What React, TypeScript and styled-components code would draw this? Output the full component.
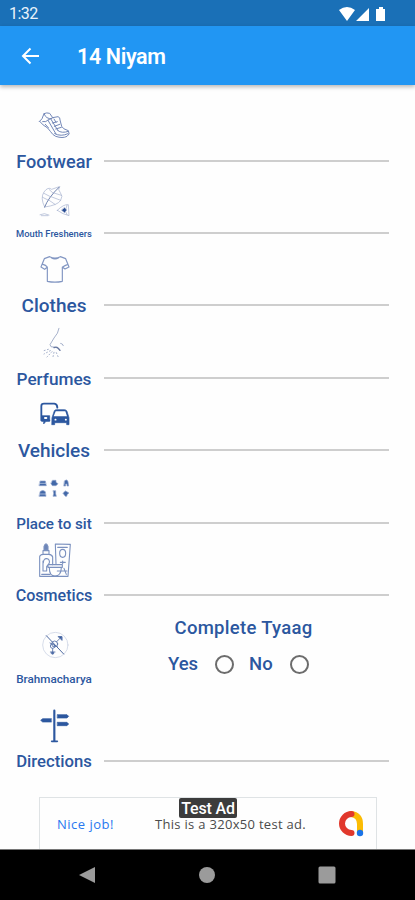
import React from "react";
import styled, { createGlobalStyle } from "styled-components";

const Global = createGlobalStyle`
  * { box-sizing: border-box; }
  body { margin: 0; background: #fefefe; font-family: Roboto, "Liberation Sans", sans-serif; }
`;
const navy = "#2c579f";

const Screen = styled.div`
  width: 415px; height: 900px; display: flex; flex-direction: column;
  background: #fefefe; overflow: hidden;
`;
const StatusBar = styled.div`
  height: 26px; flex: none; background: #1a70b7; color: #e9f3fb;
  display: flex; align-items: center; justify-content: space-between;
  padding: 1px 27px 0 9px; font-size: 16px; letter-spacing: -0.5px;
`;
const AppBar = styled.header`
  height: 59px; flex: none; background: #2196f3; color: #fff; z-index: 1;
  display: flex; align-items: center; padding: 1px 21px 0; gap: 37px;
  box-shadow: 0 2px 4px rgba(0, 0, 0, 0.28);
`;
const Title = styled.h1`
  margin: 0; font-size: 21.5px; font-weight: 600; letter-spacing: -0.35px;
`;
const List = styled.main`
  flex: 1; padding-top: 14px; display: flex; flex-direction: column;
`;
const Row = styled.section<{ $h: number }>`
  height: ${(p) => p.$h}px; flex: none; display: flex; align-items: flex-end;
  padding: 0 26px 0 16px; gap: 12px;
`;
const Kind = styled.div`
  width: 76px; display: flex; flex-direction: column; align-items: center;
`;
const Picture = styled.svg`
  width: 60px; height: 52px; fill: none; stroke: ${navy}; stroke-width: 3;
  stroke-linecap: round; stroke-linejoin: round; overflow: visible;
`;
const Label = styled.div<{ $size: number }>`
  height: 20px; line-height: 22px; white-space: nowrap; color: ${navy};
  font-weight: 500; font-size: ${(p) => p.$size}px;
`;
const Field = styled.div`
  flex: 1; height: 2px; margin-bottom: 9px; background: #cecece;
`;
const Choice = styled.div`
  width: 285px; height: 83px; padding-top: 12px;
  display: flex; flex-direction: column; color: ${navy};
  font-size: 18.5px; font-weight: 500; line-height: 22px;
`;
const Question = styled.div`
  padding-left: 70.5px; letter-spacing: 0.3px; white-space: nowrap;
`;
const Options = styled.div`
  display: flex; align-items: center; padding: 14px 0 0 64px;
`;
const Option = styled.label<{ $w: number }>`
  width: ${(p) => p.$w}px; display: flex; align-items: center; justify-content: space-between;
`;
const Radio = styled.span`
  width: 19px; height: 19px; border: 2px solid #6c6c6c; border-radius: 50%;
`;
const Gap = styled.div`
  width: 15px;
`;
const Ad = styled.aside`
  position: relative; width: 338px; height: 52px; margin: 0 0 0 39px; flex: none;
  border: 1px solid #dfe3e5; border-bottom: 0; display: flex; align-items: center;
  padding: 0 12px 0 17px; font-family: "Open Sans", sans-serif;
`;
const AdLink = styled.span`
  width: 98px; color: #2878f0; font-size: 13px; letter-spacing: 0.5px; white-space: nowrap;
`;
const AdText = styled.span`
  flex: 1; color: #4b4b4b; font-size: 13px; letter-spacing: 0.3px; white-space: nowrap;
`;
const AdBadge = styled.div`
  position: absolute; left: 139px; top: 0; width: 58px; height: 20px; border-radius: 2px;
  background: #3c3c3c; color: #fff; text-align: center; white-space: nowrap;
  font: 500 16px/22px Roboto, sans-serif; letter-spacing: -0.15px;
`;
const NavBar = styled.nav`
  height: 51px; flex: none; background: #000; border-top: 1px solid #777;
  display: flex; justify-content: space-between; align-items: center; padding: 0 79px 0 78px;
`;

const Shoe = () => (
  <g strokeWidth={3} stroke="#7488b8">
    <path d="M119 79 Q127 75 132 56 Q140 52 149 55 L158 68 L174 65 Q181 67 180 75 L185 94 Q188 102 205 107 Q212 118 201 124 Q188 131 167 124 Q158 120 151 109 L143 99 Q128 91 119 79Z" />
    <path d="M132 56 Q138 73 155 71 M128 80 Q139 82 144 75 L158 68 M144 76 L168 117 M153 73 L174 107 M157 84 L172 80 M163 94 L179 88 M167 102 L184 97 M174 107 Q185 116 205 109 M164 116 Q183 126 204 116 M136 88 L145 98 M162 72 L168 82" />
  </g>
);
const Leaf = () => (
  <g strokeWidth={1.8} stroke="#98a6c8">
    <path d="M134 111 Q120 84 132 66 Q144 49 155 58 L178 50 Q173 60 181 68 Q190 78 182 91 Q173 106 134 111Z" />
    <path d="M134 111 Q145 82 178 51" stroke="#7184b0" strokeWidth={3} />
    <path d="M144 90 L128 82 M151 80 L132 70 M160 70 L148 59 M146 90 L165 103 M153 80 L182 91 M162 69 L184 76" />
    <path d="M120 134 Q133 127 147 135 M124 137 L144 137 M172 121 Q191 102 205 104 L207 137 Q188 133 172 121Z" />
    <path d="M194 113 L200 120 L194 128 L185 121Z" fill="#254b93" />
    <path d="M201 106 L198 116 M201 134 L197 125" />
  </g>
);
const Shirt = () => (
  <path stroke="#8296c2" strokeWidth={3.5} d="M149 35 Q165 43 181 35 L197 41 L207 66 L195 72 L187 66 V109 Q165 114 142 109 V66 L134 73 L123 66 L133 41Z M129 58 Q137 60 142 66 M188 66 Q195 61 202 59 M154 38 Q165 46 176 38" />
);
const Nose = () => (
  <g stroke="#94a1c0" strokeWidth={2.5}>
    <path d="M177 31 Q175 46 162 60 L150 80 Q151 89 161 87 Q174 88 178 95" />
    <path d="M162 89 Q171 83 180 97" stroke="#6777a0" strokeWidth={4} />
    <path d="M182 76 Q188 76 190 83" />
    <path strokeDasharray="3 7" d="M145 94 L128 99 M151 98 L132 108 M156 101 L141 117 M162 103 L158 121 M169 104 L176 120" />
  </g>
);
const Cars = () => (
  <g>
    <path strokeWidth={5.5} d="M148 91 H124 V48 Q124 41 132 41 H163 Q172 42 172 53" />
    <path fill={navy} strokeWidth={2} d="M126 77 H149 V94 H138 L131 102 V94 H126Z" />
    <path stroke="#fff" strokeWidth={6} d="M135 84 H139" />
    <path fill={navy} strokeWidth={2} d="M156 83 L163 62 Q165 59 169 59 H194 Q199 59 201 64 L207 83 V104 H200 V98 H164 V104 H156Z" />
    <path fill="#fff" stroke="none" d="M167 64 H196 L201 79 H161Z" />
    <path stroke="#fff" strokeWidth={5} d="M166 89 H167 M197 89 H198" />
  </g>
);
const Seats = () => (
  <g fill="#4268a8" stroke="#91a5cc" strokeWidth={2}>
    <path d="M121 48 H136 L139 62 H118Z M158 46 H168 V52 L174 56 L168 62 H157 L153 56Z M194 47 Q201 41 204 50 L206 63 H201 V57 H197 V63 H192Z M121 79 Q129 73 136 80 L138 94 H118Z M160 77 H167 V86 L169 94 H159 L161 86Z M197 78 L207 84 L202 88 L200 94 H196 L189 85Z" />
    <path stroke="#d5def0" strokeWidth={2} d="M118 55 H139 M119 87 H137" />
  </g>
);
const Bottles = () => (
  <g stroke="#7b91bf" strokeWidth={3.3}>
    <path d="M119 124 V65 Q120 59 129 58 V47 H147 V58 Q156 59 158 66 V89 M119 124 H204 L211 28 L166 27 L168 86 M129 58 H147" />
    <path d="M132 45 V34 Q138 19 144 34 V45Z" fill="#6d86b8" />
    <path d="M130 83 Q131 70 140 71 Q150 72 148 84 L140 95 V108 H129 V78 M144 89 H187 V97 H144Z M148 98 Q148 123 165 123 Q183 123 184 98 M172 108 H201 M125 118 H150 M192 100 L199 118" />
    <ellipse cx="188" cy="55" rx="9" ry="12" />
    <path d="M173 37 H202 M188 78 V86 M181 82 H196" />
  </g>
);
const NoRomance = () => (
  <g strokeWidth={2.6} stroke="#5571a8">
    <circle cx="166" cy="105" r="38" stroke="#c3cce0" strokeWidth={2} />
    <path d="M139 77 L191 132" stroke="#4e69a0" strokeWidth={3} />
    <circle cx="164" cy="102" r="9" /><circle cx="158" cy="108" r="7" />
    <path d="M170 95 L184 81 M175 80 H186 V91 M158 116 V133 M151 126 H165 M150 99 L173 111" />
    <path fill={navy} d="M176 80 H185 V89Z M155 127 H161 V131 H155Z" />
  </g>
);
const Signpost = () => (
  <g>
    <path strokeWidth={6.5} d="M163 302 V393" />
    <path strokeWidth={5} d="M155 394 H172" />
    <path fill={navy} strokeWidth={2} d="M172 314 H201 L206 319 L201 324 H172Z M172 337 H201 L206 342 L201 347 H172Z M154 326 H128 L122 331 L128 336 H154Z" />
    <path stroke="#fff" strokeWidth={2} d="M169 312 V326 M169 335 V349 M157 324 V338" />
  </g>
);

const rows = [
  { name: "Footwear", size: 18.1, h: 72, top: 12, Art: Shoe },
  { name: "Mouth Fresheners", size: 9.35, h: 72, top: 3, Art: Leaf },
  { name: "Clothes", size: 19, h: 72, top: -6, Art: Shirt },
  { name: "Perfumes", size: 17.2, h: 73, top: -6, Art: Nose },
  { name: "Vehicles", size: 19, h: 72, top: -6, Art: Cars },
  { name: "Place to sit", size: 15.2, h: 73, top: -12, Art: Seats },
  { name: "Cosmetics", size: 16.1, h: 72, top: -6, Art: Bottles },
  { name: "Brahmacharya", size: 11.7, h: 83, top: 18, Art: NoRomance, choice: true },
  { name: "Directions", size: 16.7, h: 83, top: 267, Art: Signpost },
];

export default function App() {
  return (
    <Screen>
      <Global />
      <StatusBar>
        <span>1:32</span>
        <svg width="50" height="16" viewBox="0 0 50 16" fill="#fff">
          <path d="M1 4 Q9 -2 17 4 L9 15Z M18 15 L31 2 V15Z M38 3 H41 V1 H45 V3 H47 V15 H38Z" />
        </svg>
      </StatusBar>
      <AppBar>
        <svg width="19" height="18" viewBox="0 0 19 18" fill="none" stroke="#fff" strokeWidth="2">
          <path d="M18 9 H2 M9.5 1.5 L2 9 L9.5 16.5" />
        </svg>
        <Title>14 Niyam</Title>
      </AppBar>
      <List>
        {rows.map(({ name, size, h, top, Art, choice }) => (
          <Row key={name} $h={h}>
            <Kind>
              <Picture viewBox={`72 ${top} 180 156`}><Art /></Picture>
              <Label $size={size}>{name}</Label>
            </Kind>
            {choice ? (
              <Choice>
                <Question>Complete Tyaag</Question>
                <Options>
                  <Option $w={66}>Yes<Radio /></Option>
                  <Gap />
                  <Option $w={60}>No<Radio /></Option>
                </Options>
              </Choice>
            ) : <Field />}
          </Row>
        ))}
      </List>
      <Ad>
        <AdLink>Nice job!</AdLink>
        <AdText>This is a 320x50 test ad.</AdText>
        <svg width="27" height="27" viewBox="0 0 27 27" fill="none" strokeWidth="6" strokeLinecap="round">
          <path d="M14 4 Q23 5 23 14 V22" stroke="#fbbc04" />
          <path d="M14.5 4 A9.5 9.5 0 1 0 14.5 23" stroke="#e1382c" />
          <circle cx="23" cy="23" r="3.2" fill="#1a73e8" />
        </svg>
        <AdBadge>Test Ad</AdBadge>
      </Ad>
      <NavBar>
        <svg width="18" height="18" viewBox="0 0 18 18" fill="#9b9b9b"><path d="M1 9 L17 1 V17Z" /></svg>
        <svg width="18" height="18" viewBox="0 0 18 18" fill="#9b9b9b"><circle cx="9" cy="9" r="8" /></svg>
        <svg width="18" height="18" viewBox="0 0 18 18" fill="#9b9b9b"><rect x="0.5" y="0.5" width="17" height="17" rx="1.5" /></svg>
      </NavBar>
    </Screen>
  );
}
